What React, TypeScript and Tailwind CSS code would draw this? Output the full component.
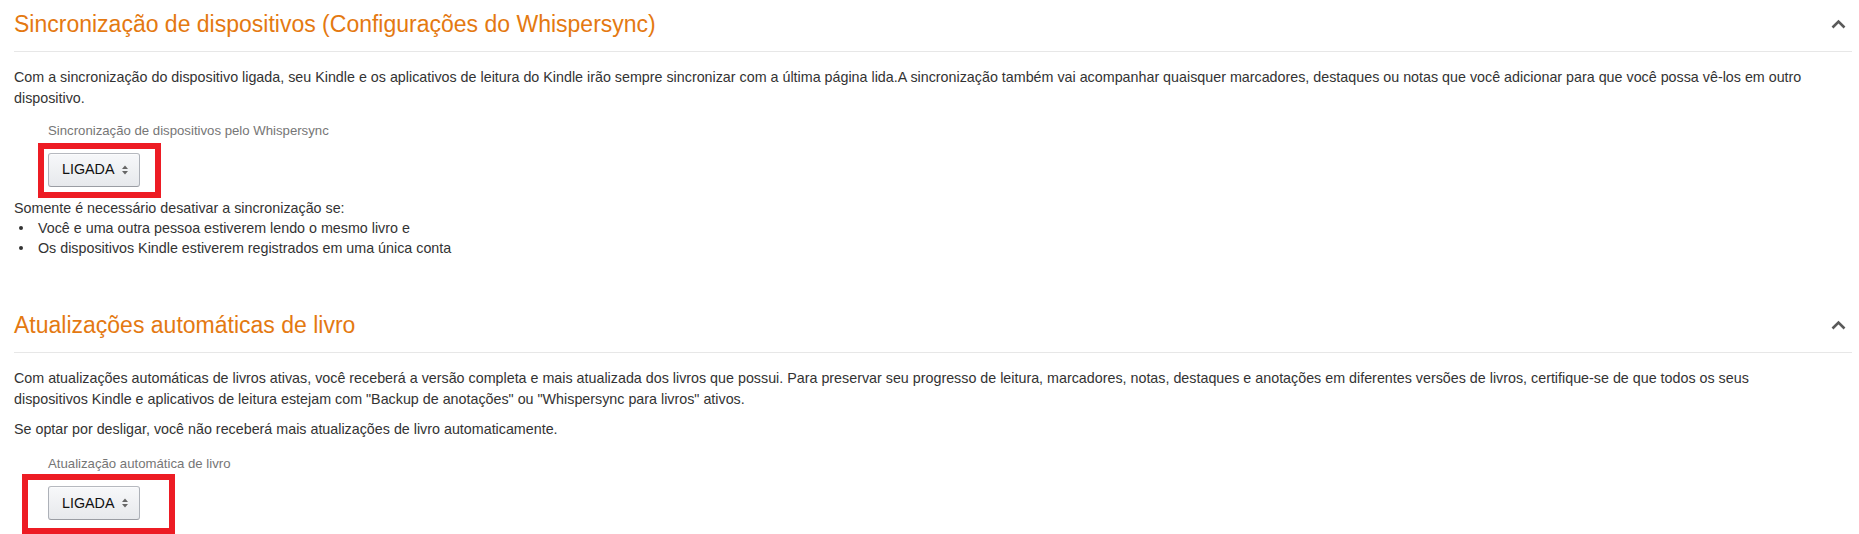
import React from "react";

function Chevron() {
  return (
    <svg width="15" height="10" viewBox="0 0 15 10" className="mr-[6px] shrink-0">
      <polyline points="1.5,8.5 7.5,2.5 13.5,8.5" fill="none" stroke="#5a5a5a" strokeWidth="2.6" />
    </svg>
  );
}

function SelectArrows() {
  return (
    <svg width="6" height="10" viewBox="0 0 6 10" className="shrink-0">
      <polygon points="3,0.5 6,4 0,4" fill="#666" />
      <polygon points="0,6 6,6 3,9.5" fill="#666" />
    </svg>
  );
}

function Dropdown() {
  return (
    <div className="inline-flex items-center w-[92px] h-[34px] border border-[#adb1b8] border-t-[#b6b9bf] border-b-[#9a9da3] rounded-[3px] bg-gradient-to-b from-[#f7f8fa] to-[#e7e9ec] pl-[13px] text-[14.3px] text-[#111] shadow-[inset_0_1px_0_rgba(255,255,255,0.6)]">
      <span className="leading-none">LIGADA</span>
      <span className="ml-[8px] flex items-center">
        <SelectArrows />
      </span>
    </div>
  );
}

function Header({ title }: { title: string }) {
  return (
    <>
      <div className="flex items-center justify-between">
        <h2 className="text-[23px] leading-[30px] text-[#e47911] font-normal">{title}</h2>
        <Chevron />
      </div>
      <div className="mt-[12px] h-px bg-[#e7e7e7]" />
    </>
  );
}

export default function App() {
  return (
    <div className="bg-white w-full h-[534px] overflow-hidden pl-[14px] pr-[7px] pt-[9px] font-['Liberation_Sans',Arial,sans-serif] text-[#333]">
      {/* Section 1 */}
      <Header title="Sincronização de dispositivos (Configurações do Whispersync)" />
      <p className="mt-[14.5px] text-[14.3px] leading-[21px] whitespace-nowrap">
        Com a sincronização do dispositivo ligada, seu Kindle e os aplicativos de leitura do Kindle irão sempre sincronizar com a última página lida.A sincronização também vai acompanhar quaisquer marcadores, destaques ou notas que você adicionar para que você possa vê-los em outro
        <br />
        dispositivo.
      </p>
      <div className="mt-[12px] pl-[34px] text-[13.2px] leading-[19px] text-[#767676]">
        Sincronização de dispositivos pelo Whispersync
      </div>
      <div className="mt-[13px] pl-[34px]">
        <div className="relative inline-block align-top">
          <Dropdown />
          <div className="absolute left-[-10px] top-[-10px] w-[123px] h-[55px] border-[6px] border-[#ed1c24] pointer-events-none" />
        </div>
      </div>
      <p className="mt-[11px] text-[14.3px] leading-[20px]">Somente é necessário desativar a sincronização se:</p>
      <ul className="text-[14.3px] leading-[20px]">
        <li className="flex items-center">
          <span className="ml-[5px] w-[4px] h-[4px] rounded-full bg-[#333] shrink-0" />
          <span className="ml-[15px]">Você e uma outra pessoa estiverem lendo o mesmo livro e</span>
        </li>
        <li className="flex items-center">
          <span className="ml-[5px] w-[4px] h-[4px] rounded-full bg-[#333] shrink-0" />
          <span className="ml-[15px]">Os dispositivos Kindle estiverem registrados em uma única conta</span>
        </li>
      </ul>

      {/* Section 2 */}
      <div className="mt-[52.5px]">
        <Header title="Atualizações automáticas de livro" />
      </div>
      <p className="mt-[14.5px] text-[14.3px] leading-[21px] whitespace-nowrap">
        Com atualizações automáticas de livros ativas, você receberá a versão completa e mais atualizada dos livros que possui. Para preservar seu progresso de leitura, marcadores, notas, destaques e anotações em diferentes versões de livros, certifique-se de que todos os seus
        <br />
        dispositivos Kindle e aplicativos de leitura estejam com "Backup de anotações" ou "Whispersync para livros" ativos.
      </p>
      <p className="mt-[9px] text-[14.3px] leading-[21px]">
        Se optar por desligar, você não receberá mais atualizações de livro automaticamente.
      </p>
      <div className="mt-[14px] pl-[34px] text-[13.2px] leading-[19px] text-[#767676]">
        Atualização automática de livro
      </div>
      <div className="mt-[13.5px] pl-[34px]">
        <div className="relative inline-block align-top">
          <Dropdown />
          <div className="absolute left-[-26px] top-[-12px] w-[153px] h-[60px] border-[6px] border-[#ed1c24] pointer-events-none" />
        </div>
      </div>
    </div>
  );
}
